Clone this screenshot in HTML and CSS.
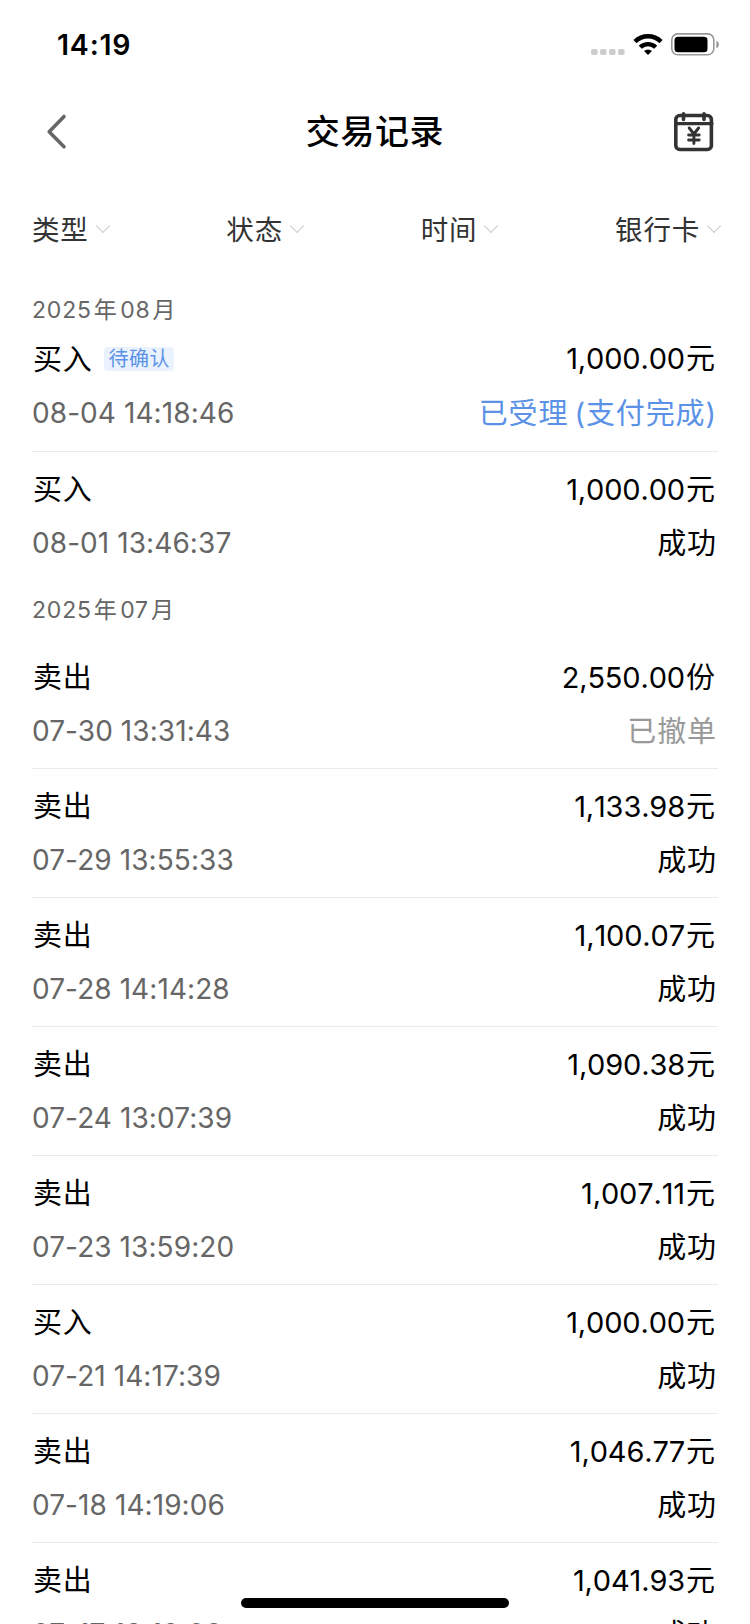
FILE: index.html
```html
<!DOCTYPE html>
<html lang="zh-CN">
<head>
<meta charset="utf-8">
<title>交易记录</title>
<link rel="stylesheet" href="styles.css">
</head>
<body>
<div class="screen">
  <div class="status-bar">
    <span class="clock">14:19</span>
    <svg class="status-icons" width="130" height="26" viewBox="0 0 130 26">
      <g fill="#cccccc">
        <rect x="1" y="17" width="6.6" height="6" rx="2"/><rect x="10" y="17" width="6.6" height="6" rx="2"/><rect x="19" y="17" width="6.6" height="6" rx="2"/><rect x="28" y="17" width="6.6" height="6" rx="2"/>
      </g>
      <g fill="none" stroke="#000" stroke-width="4.400">
        <path d="M45 9.600a18.500 18.500 0 0 1 26 0"/>
        <path d="M50.300 15.300a11 11 0 0 1 15.400 0"/>
      </g>
      <path d="M54 19q4-3.200 8 0l-4 4z" fill="#000"/>
      <rect x="81.800" y="1.900" width="42" height="20.800" rx="6" fill="none" stroke="#999" stroke-width="1.600"/>
      <rect x="84.500" y="4.800" width="33" height="15.400" rx="3.500" fill="#000"/>
      <path d="M126.300 8.800q2.700 1 2.700 3.700t-2.700 3.700z" fill="#999"/>
    </svg>
  </div>
  <header class="nav">
    <svg class="back" width="24" height="38" viewBox="0 0 24 38"><path d="M19 3.500 4.200 18.700 19 33.700" fill="none" stroke="#666" stroke-width="3.600" stroke-linecap="round" stroke-linejoin="round"/></svg>
    <h1 class="title">交易记录</h1>
    <svg class="calendar" width="42" height="42" viewBox="0 0 42 42" fill="none" stroke="#333" stroke-width="3.600" stroke-linecap="round" stroke-linejoin="round">
      <rect x="2.800" y="4.500" width="35.600" height="34" rx="4"/>
      <path d="M3 12.600h36" stroke-width="3.200"/>
      <path d="M10.500 2.800v5.600M31 2.800v5.600"/>
      <path d="M16.200 17l4.700 6 4.700-6M20.900 23v9.500M15.600 24h10.600M15.600 29h10.600" stroke-width="2.900"/>
    </svg>
  </header>
  <nav class="filters">
    <span class="filter">类型<i class="chevron"></i></span>
    <span class="filter">状态<i class="chevron"></i></span>
    <span class="filter">时间<i class="chevron"></i></span>
    <span class="filter">银行卡<i class="chevron"></i></span>
  </nav>
  <main class="records">
    <h2 class="month month-first"><span>2025</span>年<span class="month-number">08</span>月</h2>
    <section class="record record-first"><div class="kind">买入<b class="badge">待确认</b></div><div class="amount"><span>1,000.00</span>元</div><time class="date">08-04 14:18:46</time><div class="state accepted">已受理<span class="paren">(</span>支付完成<span>)</span></div></section>
    <section class="record record-last"><div class="kind">买入</div><div class="amount"><span>1,000.00</span>元</div><time class="date">08-01 13:46:37</time><div class="state">成功</div></section>
    <h2 class="month"><span>2025</span>年<span class="month-number">07</span>月</h2>
    <section class="record"><div class="kind">卖出</div><div class="amount"><span>2,550.00</span>份</div><time class="date">07-30 13:31:43</time><div class="state canceled">已撤单</div></section>
    <section class="record"><div class="kind">卖出</div><div class="amount"><span>1,133.98</span>元</div><time class="date">07-29 13:55:33</time><div class="state">成功</div></section>
    <section class="record"><div class="kind">卖出</div><div class="amount"><span>1,100.07</span>元</div><time class="date">07-28 14:14:28</time><div class="state">成功</div></section>
    <section class="record"><div class="kind">卖出</div><div class="amount"><span>1,090.38</span>元</div><time class="date">07-24 13:07:39</time><div class="state">成功</div></section>
    <section class="record"><div class="kind">卖出</div><div class="amount"><span>1,007.11</span>元</div><time class="date">07-23 13:59:20</time><div class="state">成功</div></section>
    <section class="record"><div class="kind">买入</div><div class="amount"><span>1,000.00</span>元</div><time class="date">07-21 14:17:39</time><div class="state">成功</div></section>
    <section class="record"><div class="kind">卖出</div><div class="amount"><span>1,046.77</span>元</div><time class="date">07-18 14:19:06</time><div class="state">成功</div></section>
    <section class="record"><div class="kind">卖出</div><div class="amount"><span>1,041.93</span>元</div><time class="date">07-17 13:18:09</time><div class="state">成功</div></section>
  </main>
  <div class="home-indicator"></div>
</div>
</body>
</html>
```
FILE: styles.css
```css
* { box-sizing: border-box; }
body { margin: 0; background: #fff; color: #000; font-family: Inter, "Noto Sans CJK SC", sans-serif; }
.screen { position: relative; width: 750px; height: 1624px; overflow: hidden; background: #fff; }
.status-bar { height: 90px; padding: 0 30px 0 57px; display: flex; align-items: center; justify-content: space-between; }
.clock { font-size: 28.500px; font-weight: 600; line-height: 40px; letter-spacing: .8px; }
.status-icons { flex: none; }
.nav { height: 84px; padding: 0 35px 0 45px; display: grid; grid-template-columns: 1fr auto 1fr; align-items: center; }
.title { margin: 0; padding-right: 10px; font-size: 34px; line-height: 50px; font-weight: 500; letter-spacing: .6px; }
.calendar { justify-self: end; }
.filters { height: 110px; padding: 2px 29px 0 32px; display: flex; justify-content: space-between; align-items: center; color: #333; font-size: 27.500px; letter-spacing: .8px; }
.filter { display: flex; align-items: center; line-height: 41px; }
.chevron { width: 10px; height: 10px; margin: -8px 2px 0 9px; border: solid #ccc; border-width: 0 1.5px 1.5px 0; transform: rotate(45deg); }
.records { padding: 0 32px; }
.month { height: 59px; margin: 0; color: #666; font-size: 23px; font-weight: 400; line-height: 58px; letter-spacing: .5px; }
.month-first { height: 38px; line-height: 53px; }
.month span { letter-spacing: .8px; margin-right: 2px; }
.month .month-number { margin-left: 3px; }
.record { height: 129px; padding: 14px 0 0; display: grid; grid-template-columns: auto auto; grid-template-rows: 48px 57px; justify-content: space-between; border-bottom: 1px solid #ebebeb; line-height: 48px; }
.record-first { height: 130px; padding-top: 13px; grid-template-rows: 49px 57px; }
.record-last { border-color: transparent; }
.kind { display: flex; align-items: center; padding-left: 1px; font-size: 29px; line-height: 50px; letter-spacing: .7px; }
.record-first .kind, .record-first .amount { line-height: 48px; }
.badge { height: 24px; margin: -2px 0 0 12px; padding: 0 4px; border-radius: 4px; background: #eaf2fe; color: #5b92e8; font-size: 20px; font-weight: 400; line-height: 24px; letter-spacing: .6px; }
.amount { padding-right: 3px; text-align: right; font-size: 29px; }
.amount span { margin-right: 1px; font-kerning: none; letter-spacing: -.15px; }
.date { color: #666; font-size: 28px; line-height: 58px; letter-spacing: .08px; }
.state { padding-right: 1px; text-align: right; font-size: 29px; line-height: 60px; letter-spacing: .9px; }
.paren { margin-left: 6px; }
.accepted { color: #5b92e8; }
.canceled { color: #999; }
.home-indicator { position: absolute; left: 241px; top: 1598px; width: 268px; height: 10px; border-radius: 5px; background: #000; }
```
